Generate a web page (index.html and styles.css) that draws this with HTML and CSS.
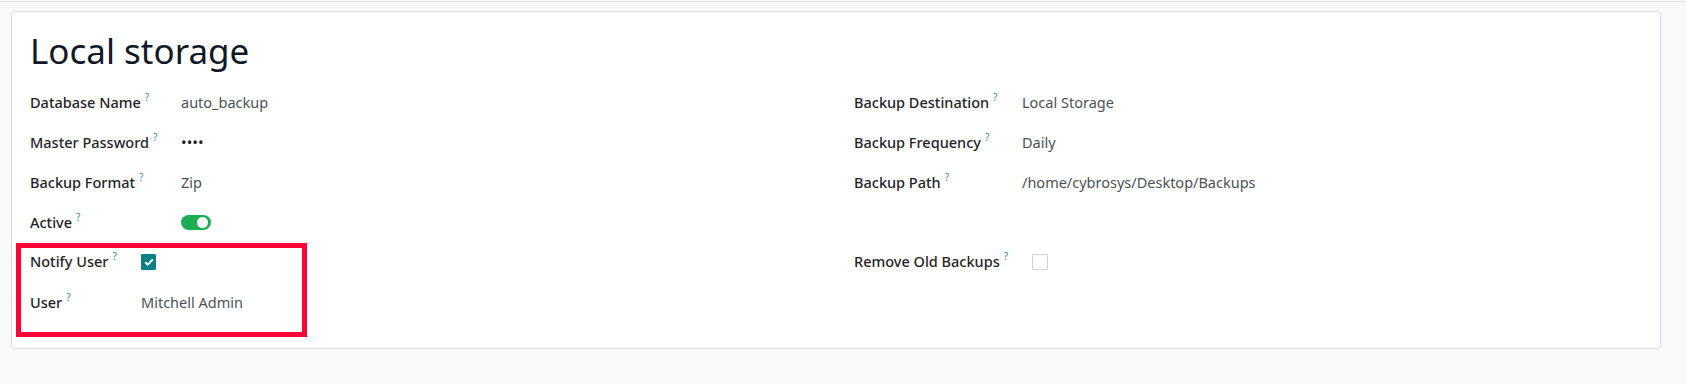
FILE: index.html
```html
<!DOCTYPE html>
<html lang="en">
<head>
    <meta charset="UTF-8">
    <title>Local storage</title>
    <link rel="stylesheet" href="styles.css">
</head>
<body>
    <div class="top-line"></div>

    <div class="sheet">
        <h1 class="title">Local storage</h1>

        <div class="columns">
            <div class="col">
                <div class="group group-main">
                    <div class="field">
                        <span class="label">Database Name<sup>?</sup></span>
                        <span class="value">auto_backup</span>
                    </div>
                    <div class="field">
                        <span class="label">Master Password<sup>?</sup></span>
                        <span class="value password">••••</span>
                    </div>
                    <div class="field">
                        <span class="label">Backup Format<sup>?</sup></span>
                        <span class="value">Zip</span>
                    </div>
                    <div class="field">
                        <span class="label">Active<sup>?</sup></span>
                        <span class="value"><span class="toggle"><span class="knob"></span></span></span>
                    </div>
                </div>

                <div class="group group-notify">
                    <div class="field">
                        <span class="label">Notify User<sup>?</sup></span>
                        <span class="value">
                            <span class="check checked">
                                <svg width="10" height="8" viewBox="0 0 10 8"><path d="M1.2 4.2 L3.8 6.6 L8.8 1.4" fill="none" stroke="#fff" stroke-width="2"/></svg>
                            </span>
                        </span>
                    </div>
                    <div class="field">
                        <span class="label">User<sup>?</sup></span>
                        <span class="value">Mitchell Admin</span>
                    </div>
                </div>
            </div>

            <div class="col">
                <div class="group group-right">
                    <div class="field">
                        <span class="label">Backup Destination<sup>?</sup></span>
                        <span class="value">Local Storage</span>
                    </div>
                    <div class="field">
                        <span class="label">Backup Frequency<sup>?</sup></span>
                        <span class="value">Daily</span>
                    </div>
                    <div class="field">
                        <span class="label">Backup Path<sup>?</sup></span>
                        <span class="value">/home/cybrosys/Desktop/Backups</span>
                    </div>
                    <div class="field"></div>
                </div>

                <div class="group group-remove">
                    <div class="field">
                        <span class="label">Remove Old Backups<sup>?</sup></span>
                        <span class="value"><span class="check"></span></span>
                    </div>
                </div>
            </div>
        </div>
    </div>
</body>
</html>
```

FILE: styles.css
```css
* {
    margin: 0;
    padding: 0;
    box-sizing: border-box;
}

body {
    font-family: "Noto Sans", "Open Sans", sans-serif;
    background: #f8f9fa;
    color: #212529;
    padding-top: 1px;
}

.top-line {
    height: 1px;
    background: #dee2e6;
}

.sheet {
    margin: 9px 25px 0 11px;
    height: 338px;
    background: #fff;
    border: 1px solid #d8dadd;
    border-radius: 4px;
    padding: 17px 18px 0;
}

.title {
    font-size: 35px;
    font-weight: 400;
    line-height: 44px;
    color: #111827;
    margin-bottom: 19px;
}

.columns {
    display: grid;
    grid-template-columns: 1fr 1fr;
    column-gap: 36px;
}

.group {
    display: flex;
    flex-direction: column;
    gap: 19px;
}

.field {
    display: grid;
    align-items: center;
    height: 21px;
    font-size: 14.5px;
    line-height: 21px;
}

.group-main .field {
    grid-template-columns: 151px 1fr;
}

.group-right .field {
    grid-template-columns: 168px 1fr;
}

.group-notify {
    margin: 10px 0 0 -14px;
    width: 291px;
    border: 5px solid #fb0537;
    padding: 3px 0 19px 9px;
    gap: 20px;
}

.group-notify .field {
    grid-template-columns: 111px 1fr;
}

.group-remove {
    margin-top: 18px;
}

.group-remove .field {
    grid-template-columns: 178px 1fr;
}

.label {
    font-weight: 500;
    color: #1f2428;
    white-space: nowrap;
}

.label sup {
    font-size: 10px;
    font-weight: 400;
    color: #2b88a3;
    margin-left: 4px;
    vertical-align: 7px;
    line-height: 0;
}

.value {
    color: #4b5157;
    display: flex;
    align-items: center;
}

.password {
    font-size: 15px;
    letter-spacing: 0;
    color: #222;
}

.toggle {
    width: 30px;
    height: 15px;
    border-radius: 8px;
    background: #1cae53;
    display: flex;
    align-items: center;
    justify-content: flex-end;
    padding-right: 3px;
}

.knob {
    width: 11px;
    height: 11px;
    border-radius: 50%;
    background: #fff;
}

.check {
    width: 16px;
    height: 16px;
    border: 1px solid #cfd3d6;
    border-radius: 1px;
    background: #fff;
    display: flex;
    align-items: center;
    justify-content: center;
}

.check.checked {
    width: 15px;
    background: #0a7f86;
    border-color: #0a7f86;
}
```
